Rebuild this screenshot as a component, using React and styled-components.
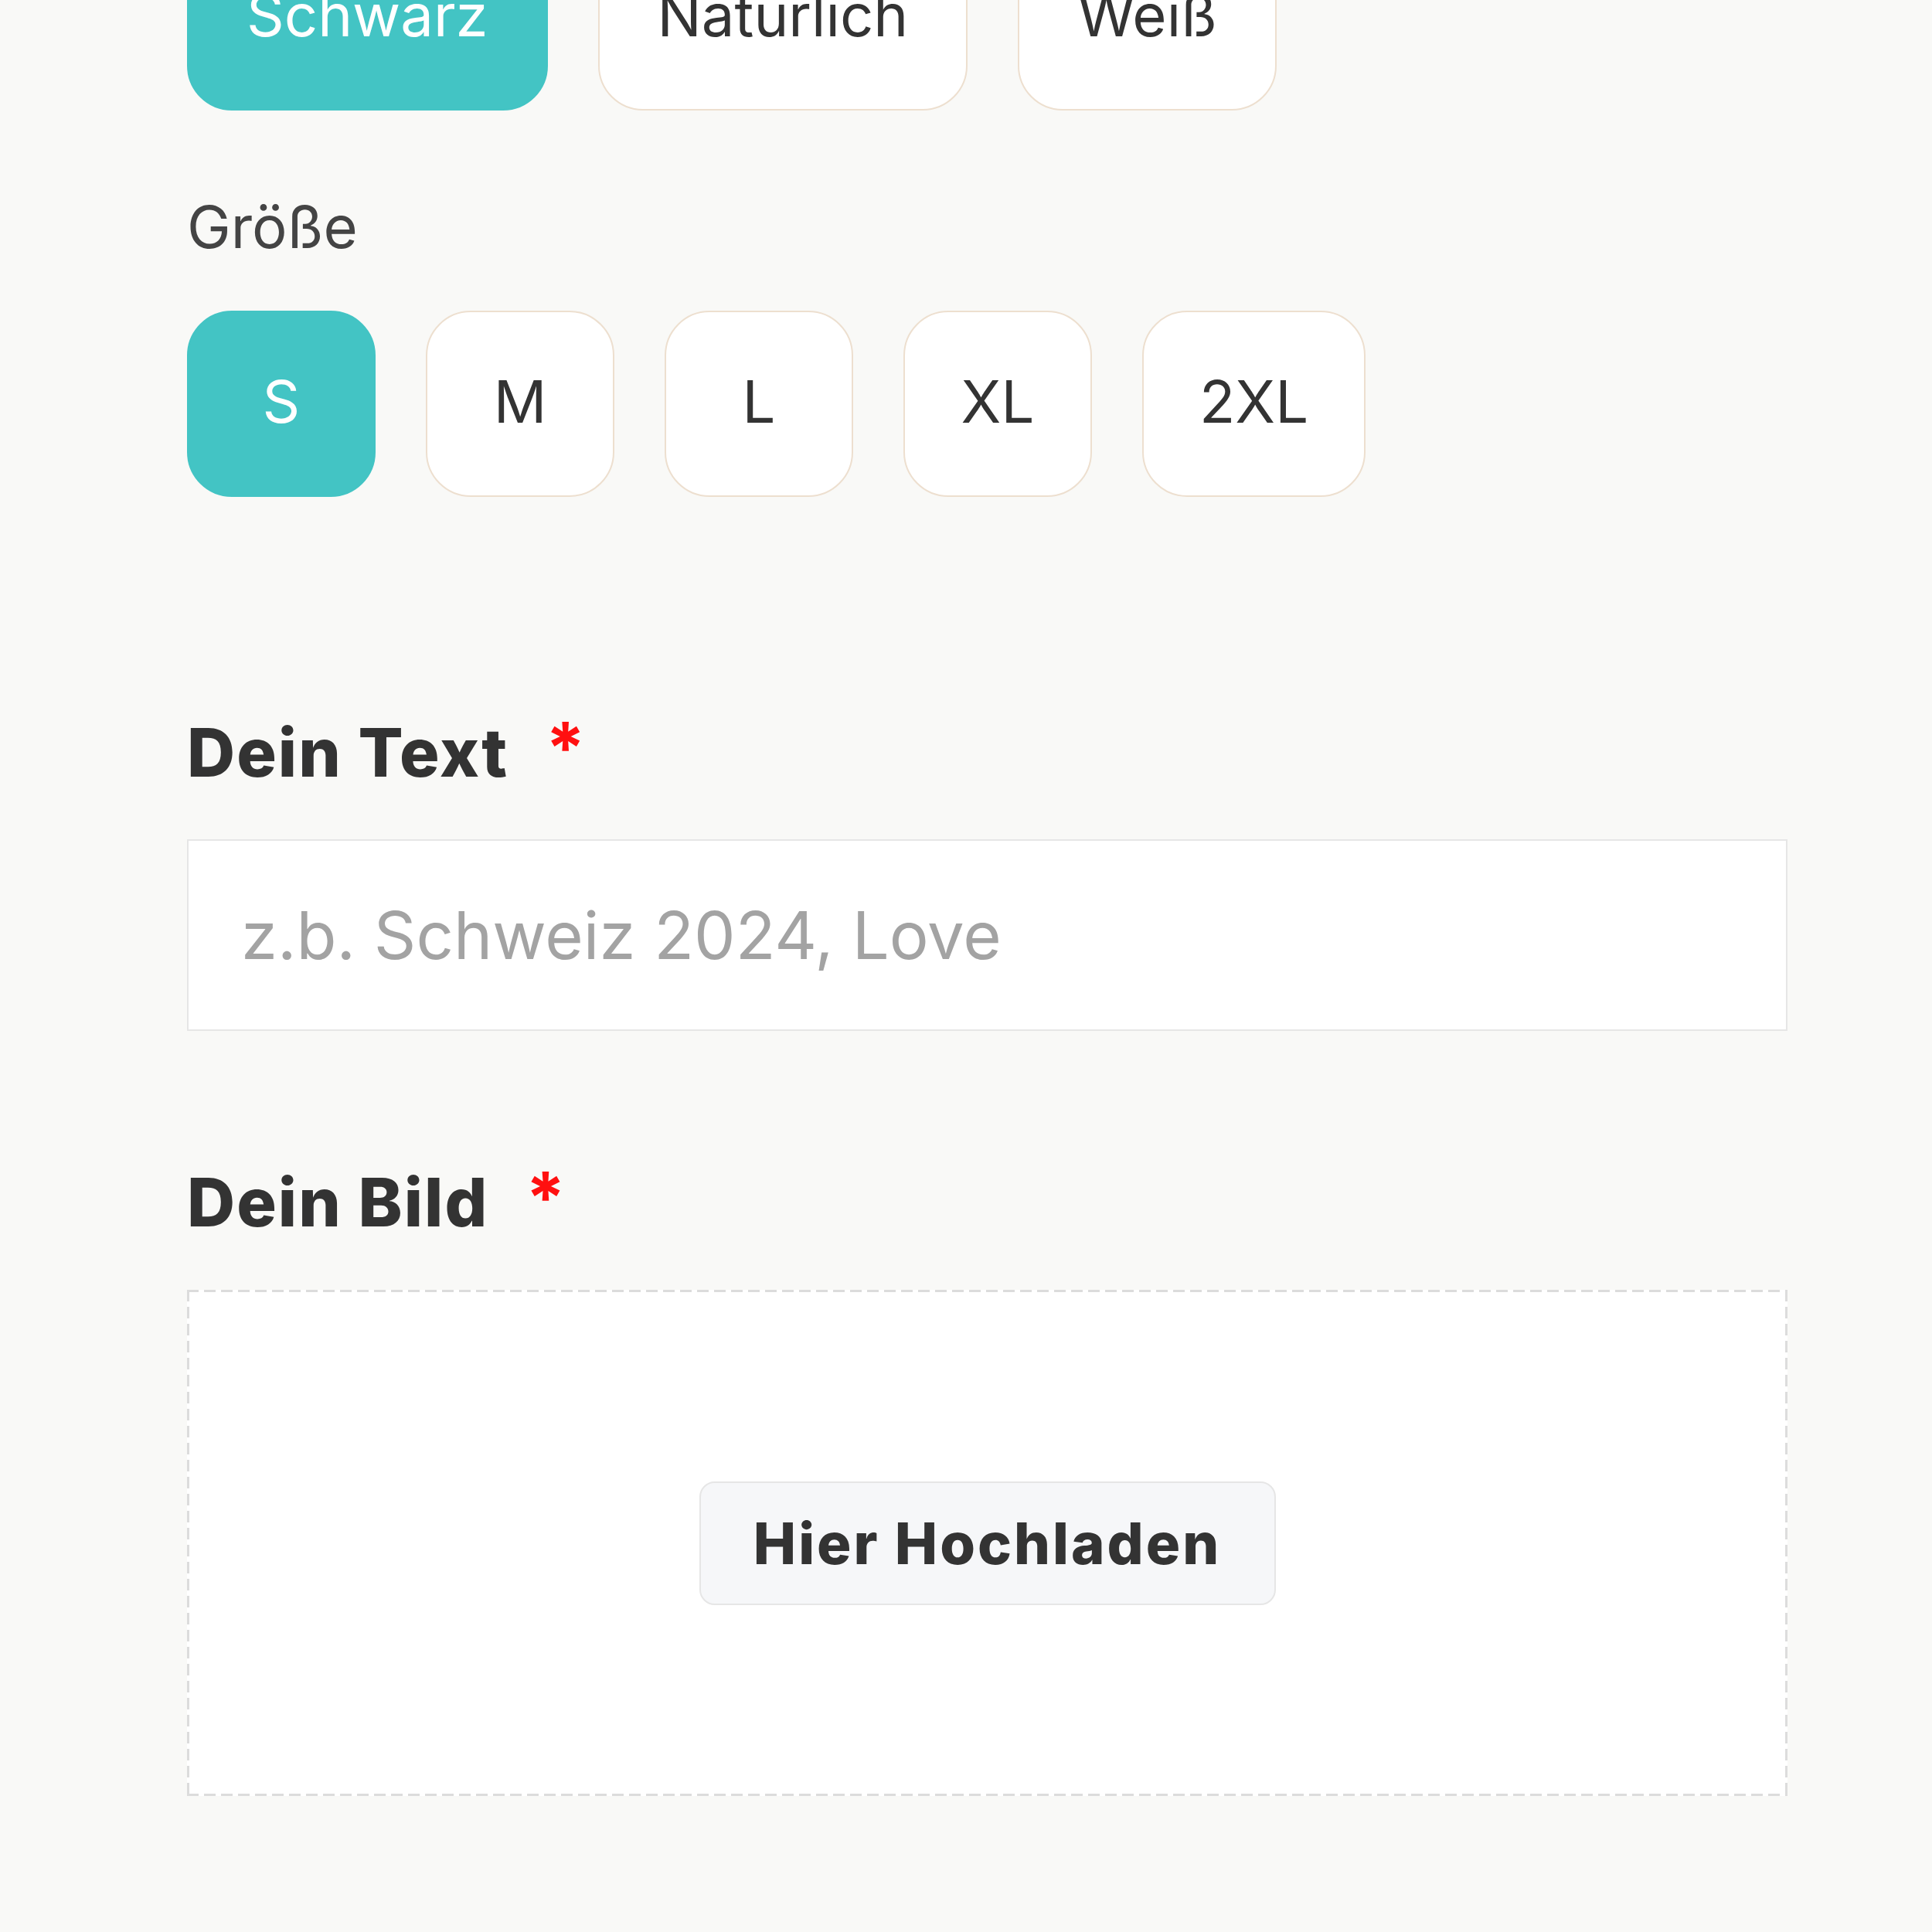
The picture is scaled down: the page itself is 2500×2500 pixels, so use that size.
import React from "react";
import styled, { createGlobalStyle } from "styled-components";

const colors = ["Schwarz", "Naturlich", "Weiß"];
const sizes = ["S", "M", "L", "XL", "2XL"];

const App = () => {
  return (
    <>
      <GlobalStyle />
      <Page>
        <OptionRow>
          {colors.map((c, i) => (
            <OptionButton key={c} $active={i === 0} $pad={75}>
              {c}
            </OptionButton>
          ))}
        </OptionRow>

        <OptionLabel>Größe</OptionLabel>
        <OptionRow $top={64}>
          {sizes.map((s, i) => (
            <OptionButton key={s} $active={i === 0}>
              {s}
            </OptionButton>
          ))}
        </OptionRow>

        <FieldLabel $top={281}>
          Dein Text
          <Required>*</Required>
        </FieldLabel>
        <TextInput placeholder="z.b. Schweiz 2024, Love" />

        <FieldLabel $top={172}>
          Dein Bild
          <Required>*</Required>
        </FieldLabel>
        <DropZone>
          <UploadButton type="button">Hier Hochladen</UploadButton>
        </DropZone>
      </Page>
    </>
  );
};

const GlobalStyle = createGlobalStyle`
  html, body {
    margin: 0;
    background: #f9f9f7;
  }
  * {
    box-sizing: border-box;
  }
`;

const Page = styled.main`
  width: 2313px;
  padding-left: 242px;
  margin-top: -98px;
  padding-bottom: 176px;
  font-family: Inter, "Liberation Sans", sans-serif;
  color: #333;
`;

const OptionRow = styled.div`
  display: flex;
  gap: 65px;
  margin-top: ${(p) => p.$top || 0}px;
`;

const OptionButton = styled.button`
  height: 241px;
  min-width: 244px;
  padding: 0 ${(p) => p.$pad || 72}px 8px;
  border-radius: 58px;
  border: 2px solid ${(p) => (p.$active ? "#43c4c4" : "#eddfcf")};
  background: ${(p) => (p.$active ? "#43c4c4" : "#ffffff")};
  color: ${(p) => (p.$active ? "#ffffff" : "#333333")};
  font-family: Inter, "Liberation Sans", sans-serif;
  font-size: 76px;
  font-weight: 400;
  display: flex;
  align-items: center;
  justify-content: center;
  cursor: pointer;
`;

const OptionLabel = styled.div`
  margin-top: 105px;
  font-size: 76px;
  line-height: 90px;
  color: #444;
`;

const FieldLabel = styled.h3`
  margin: ${(p) => p.$top}px 0 0;
  display: flex;
  align-items: flex-start;
  font-size: 86px;
  line-height: 100px;
  font-weight: 800;
  letter-spacing: 2px;
  color: #333;
`;

const Required = styled.span`
  margin-left: 48px;
  margin-top: 4px;
  color: #ff1010;
  font-size: 92px;
  line-height: 80px;
  font-weight: 700;
`;

const TextInput = styled.input`
  display: block;
  width: 100%;
  height: 248px;
  margin-top: 62px;
  padding: 0 68px;
  background: #fff;
  border: 2px solid #e6e6e6;
  font-family: Inter, "Liberation Sans", sans-serif;
  font-size: 85px;
  color: #333;
  outline: none;

  &::placeholder {
    color: #a3a3a3;
  }
`;

const DropZone = styled.div`
  height: 655px;
  margin-top: 63px;
  display: flex;
  align-items: center;
  justify-content: center;
  background:
    repeating-linear-gradient(90deg, #dcdcdc 0 15px, transparent 15px 22px) top left / 100% 3px no-repeat,
    repeating-linear-gradient(90deg, #dcdcdc 0 15px, transparent 15px 22px) bottom left / 100% 3px no-repeat,
    repeating-linear-gradient(180deg, #dcdcdc 0 15px, transparent 15px 22px) top left / 3px 100% no-repeat,
    repeating-linear-gradient(180deg, #dcdcdc 0 15px, transparent 15px 22px) top right / 3px 100% no-repeat,
    #ffffff;
`;

const UploadButton = styled.button`
  width: 746px;
  height: 160px;
  border-radius: 20px;
  border: 2px solid #e6e6e6;
  background: #f6f7f9;
  color: #333;
  font-family: Inter, "Liberation Sans", sans-serif;
  font-size: 74px;
  font-weight: 800;
  letter-spacing: 3px;
  cursor: pointer;
`;

export default App;
